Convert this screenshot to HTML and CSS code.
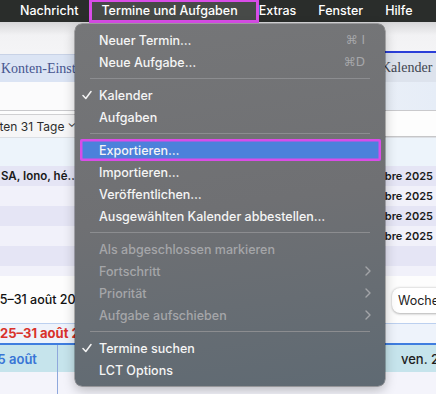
FILE: index.html
```html
<!DOCTYPE html>
<html lang="de">
<head>
    <meta charset="UTF-8">
    <title>Termine und Aufgaben</title>
    <link rel="stylesheet" href="styles.css">
</head>
<body>
    <div class="menubar">
        <span class="menubar-item">Nachricht</span>
        <span class="menubar-item active">Termine und Aufgaben</span>
        <span class="menubar-item">Extras</span>
        <span class="menubar-item">Fenster</span>
        <span class="menubar-item">Hilfe</span>
    </div>

    <div class="app">
        <div class="titlebar"></div>
        <div class="tabs">
            <div class="tab">Konten-Einstellungen</div>
            <div class="tab selected">Kalender</div>
        </div>
        <div class="strip"></div>
        <div class="filter-row">
            <div class="filter-box"><span>Anstehende Termine der nächsten 31 Tage</span><span class="caret">⌄</span></div>
        </div>
        <div class="list-head"></div>
        <div class="event-list">
            <div class="event-row"><span class="ev-title">SA, Iono, hé…</span><span class="ev-date">septembre 2025</span></div>
            <div class="event-row"><span class="ev-title"></span><span class="ev-date">septembre 2025</span></div>
            <div class="event-row"><span class="ev-title"></span><span class="ev-date">septembre 2025</span></div>
            <div class="event-row"><span class="ev-title"></span><span class="ev-date">septembre 2025</span></div>
            <div class="event-row"><span class="ev-title"></span><span class="ev-date"></span></div>
            <div class="event-row short"><span class="ev-title"></span><span class="ev-date"></span></div>
        </div>
        <div class="cal-toolbar">
            <span class="cal-range"><span>25–31 août 2025</span></span>
            <span class="view-btn">Woche</span>
        </div>
        <div class="week-label"><span>25–31 août 2025</span></div>
        <div class="day-head">
            <div class="day-col first"><span>lun. 25 août</span></div>
            <div class="day-col last"><span>ven. 29 août</span></div>
        </div>
        <div class="day-body">
            <div class="day-col first"></div>
        </div>
    </div>

    <div class="menu">
        <div class="item"><span class="check"></span><span class="label">Neuer Termin…</span><span class="shortcut">⌘ I</span></div>
        <div class="item"><span class="check"></span><span class="label">Neue Aufgabe…</span><span class="shortcut">⌘D</span></div>
        <div class="sep"></div>
        <div class="item"><span class="check"><svg width="10" height="10" viewBox="0 0 10 10"><polyline points="1,5.5 3.8,8.5 9,1.5" fill="none" stroke="#f4f4f4" stroke-width="1.5" stroke-linecap="round" stroke-linejoin="round"/></svg></span><span class="label">Kalender</span></div>
        <div class="item"><span class="check"></span><span class="label">Aufgaben</span></div>
        <div class="sep"></div>
        <div class="item highlight"><span class="check"></span><span class="label">Exportieren…</span></div>
        <div class="item"><span class="check"></span><span class="label">Importieren…</span></div>
        <div class="item"><span class="check"></span><span class="label">Veröffentlichen…</span></div>
        <div class="item"><span class="check"></span><span class="label">Ausgewählten Kalender abbestellen…</span></div>
        <div class="sep"></div>
        <div class="item disabled"><span class="check"></span><span class="label">Als abgeschlossen markieren</span></div>
        <div class="item disabled"><span class="check"></span><span class="label">Fortschritt</span><svg class="chev" width="6" height="10" viewBox="0 0 6 10"><polyline points="1,1 5,5 1,9" fill="none" stroke="#a3a5a8" stroke-width="1.4" stroke-linecap="round" stroke-linejoin="round"/></svg></div>
        <div class="item disabled"><span class="check"></span><span class="label">Priorität</span><svg class="chev" width="6" height="10" viewBox="0 0 6 10"><polyline points="1,1 5,5 1,9" fill="none" stroke="#a3a5a8" stroke-width="1.4" stroke-linecap="round" stroke-linejoin="round"/></svg></div>
        <div class="item disabled"><span class="check"></span><span class="label">Aufgabe aufschieben</span><svg class="chev" width="6" height="10" viewBox="0 0 6 10"><polyline points="1,1 5,5 1,9" fill="none" stroke="#a3a5a8" stroke-width="1.4" stroke-linecap="round" stroke-linejoin="round"/></svg></div>
        <div class="sep"></div>
        <div class="item"><span class="check"><svg width="10" height="10" viewBox="0 0 10 10"><polyline points="1,5.5 3.8,8.5 9,1.5" fill="none" stroke="#f4f4f4" stroke-width="1.5" stroke-linecap="round" stroke-linejoin="round"/></svg></span><span class="label">Termine suchen</span></div>
        <div class="item"><span class="check"></span><span class="label">LCT Options</span></div>
    </div>
</body>
</html>
```

FILE: styles.css
```css
body {
    margin: 0;
    width: 436px;
    height: 394px;
    overflow: hidden;
    font-family: Inter, "Noto Sans", sans-serif;
    background-color: #f3f3fa;
    position: relative;
}
.menubar {
    height: 22px;
    background-color: #2a2d2b;
    display: flex;
    align-items: flex-start;
    padding-left: 9px;
    color: #fff;
    font-size: 12.5px;
    font-weight: 500;
    white-space: nowrap;
}
.menubar-item {
    padding: 0 11px;
    line-height: 22px;
}
.menubar-item.active {
    box-sizing: border-box;
    height: 23px;
    line-height: 18px;
    padding: 0 18px 0 9px;
    margin-right: -11px;
    background-color: #474a48;
    border: 3px solid #d94de8;
    border-top-width: 2px;
}

/* app behind the menu */
.titlebar {
    height: 29px;
    background: linear-gradient(#d6d6d8, #f2f2f4 45%, #f4f4f6);
}
.tabs {
    height: 31px;
    display: flex;
    justify-content: space-between;
    background-color: #f4f4f6;
    font-family: "Liberation Serif", serif;
    font-size: 14px;
    color: #46558f;
}
.tab {
    margin-top: 3px;
    width: 200px;
    background-color: #dbe4f4;
    border-top: 1px solid #c8d2e6;
    line-height: 27px;
    padding-left: 1px;
    white-space: nowrap;
}
.tab.selected {
    margin-top: 0;
    width: 55px;
    padding-left: 0;
    background-color: #dde3ed;
    border-top: 2px solid #2b3fd8;
    color: #3f4550;
    line-height: 29px;
}
.strip {
    height: 28px;
    background: linear-gradient(90deg, #fbfbfc, #fbfbfc 20%, #e6edf7);
    border-bottom: 1px solid #c9c9cc;
}
.filter-row {
    height: 26px;
    padding-top: 3px;
    box-sizing: border-box;
    background-color: #fdfdfd;
    border-bottom: 1px solid #c6c6c8;
}
.filter-box {
    width: 76px;
    height: 22px;
    display: flex;
    justify-content: flex-end;
    align-items: center;
    overflow: hidden;
    white-space: nowrap;
    border-top: 1px solid #d0d0d2;
    background-color: #f6f6f7;
    font-size: 12px;
    color: #2c2c2c;
}
.filter-box .caret {
    margin-left: 3px;
    font-size: 11px;
    margin-top: -6px;
}
.list-head {
    height: 28px;
    background-color: #edf4fb;
    border-top: 1px solid #dcdfe4;
}
.event-row {
    height: 20px;
    display: flex;
    justify-content: space-between;
    align-items: center;
    font-size: 11.5px;
    font-weight: 600;
    color: #1a1a1a;
    background-color: #e5e5f5;
    white-space: nowrap;
}
.event-row:nth-child(even) {
    background-color: #f1f1fa;
}
.event-row.short {
    height: 10px;
}
.ev-title {
    padding-left: 1px;
}
.ev-date {
    padding-right: 3px;
    font-size: 11px;
}
.cal-toolbar {
    height: 47px;
    display: flex;
    justify-content: space-between;
    align-items: center;
    background-color: #fdfdfd;
    border-bottom: 1px solid #bcd0ef;
}
.cal-range {
    font-size: 12.5px;
    font-weight: 500;
    color: #111;
    white-space: nowrap;
}
.cal-range span {
    margin-left: -8px;
}
.view-btn {
    margin-right: -19px;
    margin-top: 2px;
    padding: 5px 16px 5px 6px;
    border-radius: 8px;
    background-color: #fff;
    box-shadow: 0 0.5px 2.5px rgba(0,0,0,0.3);
    font-size: 12.5px;
    color: #222;
}
.week-label {
    height: 19px;
    line-height: 19px;
    background-color: #eef3fb;
    color: #d9322b;
    font-size: 13px;
    font-weight: 700;
    white-space: nowrap;
    border-bottom: 2px solid #3f7ddf;
}
.day-head {
    height: 27px;
    display: flex;
    justify-content: space-between;
    background-color: #c6e4ec;
    font-size: 13px;
    font-weight: 600;
    white-space: nowrap;
}
.day-col.first {
    width: 57px;
    border-right: 1px solid #8fa8dc;
    display: flex;
    align-items: center;
    color: #3875d6;
}
.day-col.first span {
    margin-left: -37px;
}
.day-col.last {
    width: 35px;
    display: flex;
    align-items: center;
    color: #1e1e1e;
    font-weight: 500;
    overflow: hidden;
}
.day-body {
    height: 30px;
    display: flex;
    background-color: #f4f4fb;
}

/* dropdown menu */
.menu {
    position: absolute;
    left: 75px;
    top: 24px;
    width: 310px;
    padding: 5px 0;
    border-radius: 7px;
    background: linear-gradient(172deg, #757678 0%, #6f7073 50%, #5f6a73 100%);
    box-shadow: 0 0 0 0.5px rgba(0,0,0,0.5), 0 4px 12px rgba(0,0,0,0.25);
    font-size: 12.5px;
    font-weight: 500;
    color: #f5f5f5;
    display: flex;
    flex-direction: column;
}
.item {
    height: 22px;
    margin: 0 4px 0 5px;
    padding: 0 14px 0 2px;
    display: flex;
    align-items: center;
    border-radius: 4px;
}
.check {
    width: 14px;
    display: flex;
    align-items: center;
    margin-right: 3px;
}
.label {
    flex: 1;
    white-space: nowrap;
}
.shortcut {
    font-family: "DejaVu Sans", sans-serif;
    font-size: 12px;
    color: #a6a7aa;
    font-weight: 400;
    margin-right: 2px;
}
.chev {
    margin-right: -4px;
}
.item.disabled {
    color: #a5a6a9;
}
.item.highlight {
    background-color: #4c81db;
    box-shadow: inset 0 0 0 2.5px #d94de8;
    border-radius: 2px;
}
.sep {
    height: 1px;
    margin: 5px 15px;
    background-color: #8c8d90;
}
```
